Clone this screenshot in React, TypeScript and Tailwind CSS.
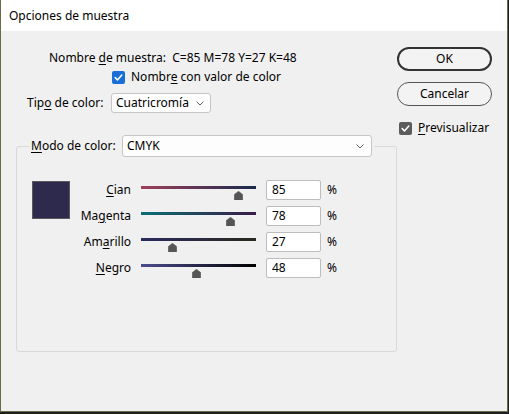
import React from 'react';

const FONT = { fontFamily: '"Noto Sans", "Open Sans", sans-serif' };

// Mnemonic letter, underlined like a Windows access key
function K({ children }: { children: React.ReactNode }) {
  return <span className="underline underline-offset-[2px] decoration-[1px]">{children}</span>;
}

function Check({ className }: { className: string }) {
  return (
    <span className={`w-[13px] h-[13px] rounded-[2px] flex items-center justify-center ${className}`}>
      <svg width="9" height="9" viewBox="0 0 9 9">
        <path d="M1.2 4.6 L3.5 6.9 L7.8 2" stroke="white" strokeWidth="1.5" fill="none" strokeLinecap="round" strokeLinejoin="round" />
      </svg>
    </span>
  );
}

function Chevron() {
  return (
    <svg width="8" height="5" viewBox="0 0 8 5" className="shrink-0">
      <path d="M0.5 0.5 L4 4 L7.5 0.5" stroke="#606060" strokeWidth="1" fill="none" />
    </svg>
  );
}

type Row = { label: React.ReactNode; value: number; from: string; to: string };

const ROWS: Row[] = [
  { label: <><K>C</K>ian</>, value: 85, from: '#a0405c', to: '#1a2a4c' },
  { label: <>Ma<K>g</K>enta</>, value: 78, from: '#0a6e74', to: '#3a1a48' },
  { label: <>Am<K>a</K>rillo</>, value: 27, from: '#2b2a60', to: '#2a2a1e' },
  { label: <><K>N</K>egro</>, value: 48, from: '#4c4c8e', to: '#000000' },
];

function Slider({ value, from, to }: { value: number; from: string; to: string }) {
  return (
    <div className="relative w-[115px] h-[20px]">
      <div
        className="absolute left-0 right-0 top-[6px] h-[3px]"
        style={{ background: `linear-gradient(to right, ${from}, ${to})` }}
      />
      <svg
        width="9"
        height="9"
        viewBox="0 0 9 9"
        className="absolute top-[11px]"
        style={{ left: `${(value / 100) * 115 - 4.5}px` }}
      >
        <path d="M4.5 0.3 L8.7 3.6 L8.7 9 L0.3 9 L0.3 3.6 Z" fill="#555555" stroke="#555555" strokeWidth="0.6" strokeLinejoin="round" />
      </svg>
    </div>
  );
}

export default function App() {
  return (
    <div className="w-[509px] h-[414px] bg-[#1f1f1f]" style={FONT}>
      <div className="w-[508px] h-[412px] bg-[#f0f0f0] border-l border-r border-b border-[#6a6a4a] text-[12px] text-black flex flex-col">
        {/* Title bar */}
        <div className="h-[31px] bg-white flex items-center pl-[8px] shrink-0">Opciones de muestra</div>

        <div className="flex">
          {/* Left part */}
          <div className="w-[396px] flex flex-col">
            <div className="mt-[19px] pl-[48px] leading-[16px] h-[16px] whitespace-pre">
              Nombre <K>d</K>e muestra:  C=85 M=78 Y=27 K=48
            </div>
            <div className="mt-[3px] pl-[111px] h-[16px] flex items-center gap-[6px] leading-[16px]">
              <Check className="bg-[#1a6fd6]" />
              <span>Nombr<K>e</K> con valor de color</span>
            </div>
            <div className="mt-[8px] pl-[26px] flex items-center">
              <span className="w-[84px] leading-[16px]">Tip<K>o</K> de color:</span>
              <div className="w-[100px] h-[20px] bg-[#fdfdfd] border border-[#c6c6c6] rounded-[3px] flex items-center pl-[4px] pr-[6px] justify-between leading-[16px]">
                <span>Cuatricromía</span>
                <Chevron />
              </div>
            </div>

            <fieldset className="mt-[22px] ml-[15px] w-[381px] border border-[#d9d9d9] rounded-[3px] px-0 pt-[23px] pb-[73px]">
              <legend className="ml-[12px] px-[2px] flex items-center">
                <span className="w-[91px] leading-[16px]"><K>M</K>odo de color:</span>
                <div className="w-[250px] h-[22px] bg-[#fdfdfd] border border-[#c6c6c6] rounded-[3px] flex items-center pl-[4px] pr-[7px] justify-between leading-[16px]">
                  <span>CMYK</span>
                  <Chevron />
                </div>
              </legend>

              <div className="flex pl-[15px]">
                <div className="w-[38px] h-[38px] mt-[1px] bg-[#2d2a4e] border border-[#595959] shrink-0" />
                <div className="flex flex-col gap-[6px]">
                  {ROWS.map((r, i) => (
                    <div key={i} className="flex items-center h-[20px]">
                      <span className="w-[61px] text-right leading-[20px]">{r.label}</span>
                      <div className="ml-[10px]">
                        <Slider value={r.value} from={r.from} to={r.to} />
                      </div>
                      <div className="ml-[10px] w-[55px] h-[20px] bg-white border border-[#bdbdbd] rounded-[2px] pl-[5px] flex items-center leading-[16px]">
                        {r.value}
                      </div>
                      <span className="ml-[6px] leading-[20px]">%</span>
                    </div>
                  ))}
                </div>
              </div>
            </fieldset>
          </div>

          {/* Right part */}
          <div className="flex flex-col">
            <button className="mt-[16px] w-[95px] h-[24px] rounded-full border-2 border-[#333333] bg-[#f3f3f3] flex items-center justify-center leading-[16px]">
              OK
            </button>
            <button className="mt-[11px] w-[95px] h-[24px] rounded-full border border-[#555555] bg-[#f3f3f3] flex items-center justify-center leading-[16px]">
              Cancelar
            </button>
            <div className="mt-[14px] ml-[2px] h-[16px] flex items-center gap-[6px] leading-[16px]">
              <Check className="bg-[#5c5c5c]" />
              <span><K>P</K>revisualizar</span>
            </div>
          </div>
        </div>
      </div>
    </div>
  );
}
